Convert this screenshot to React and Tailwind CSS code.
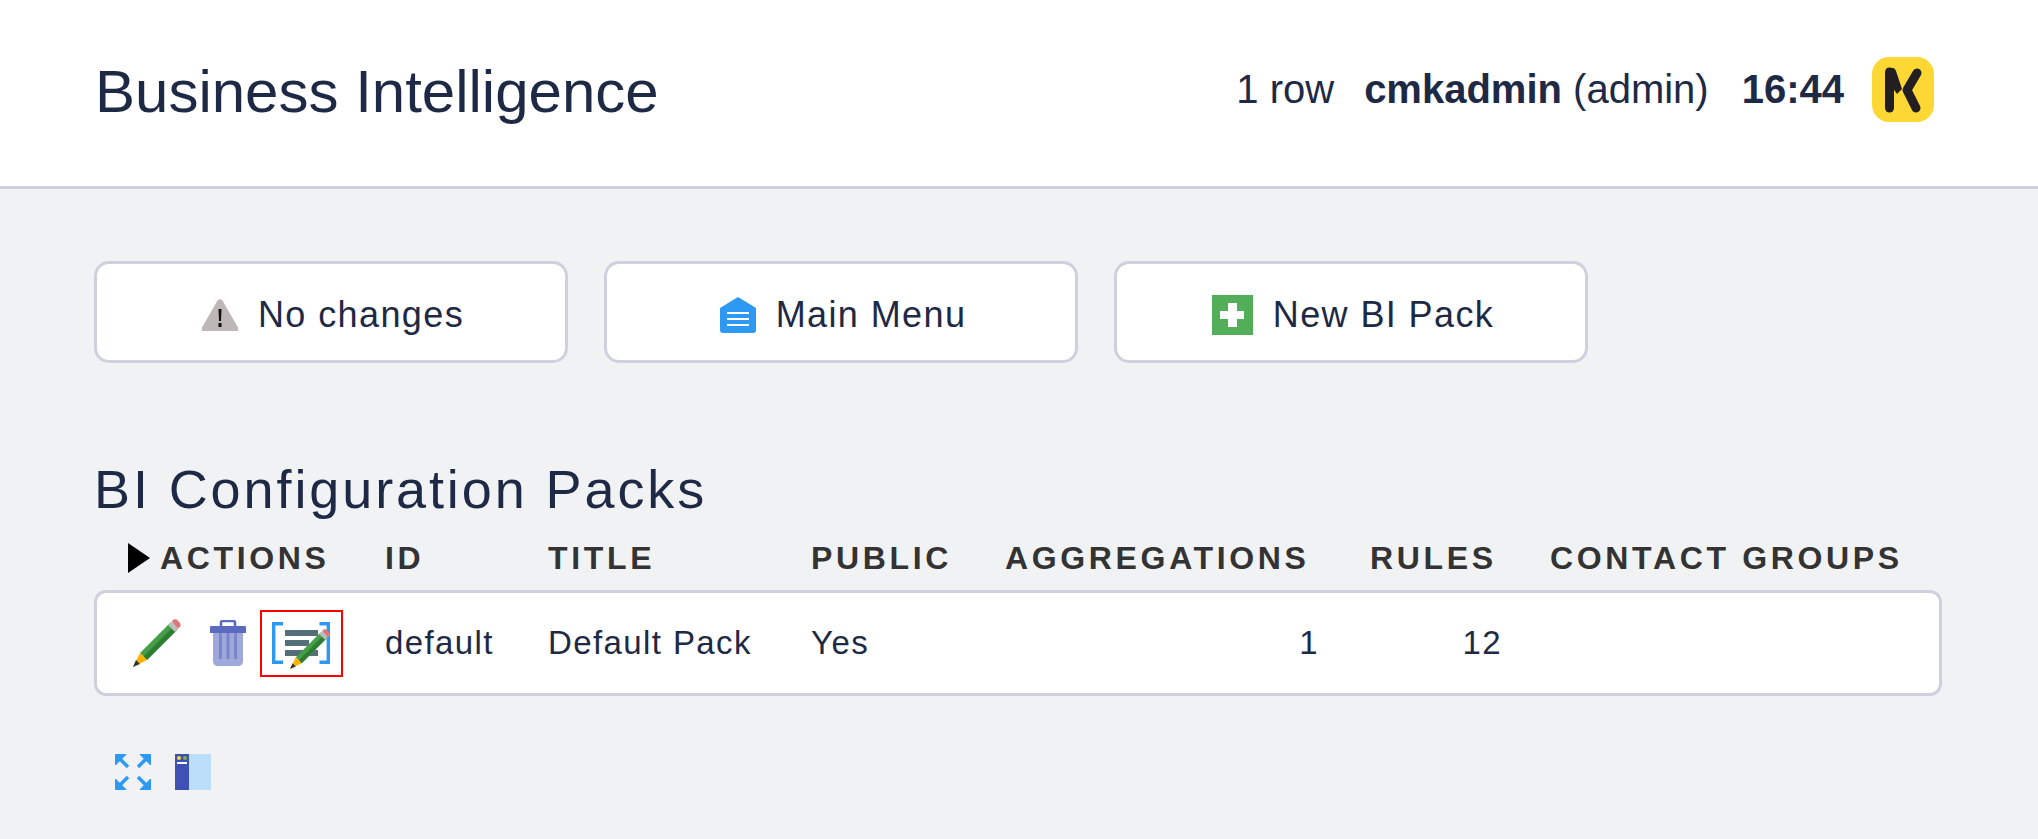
import React from 'react';

function Pencil({ className }) {
  return (
    <svg viewBox="0 0 48 48" className={className}>
      <path d="M37 4 L44 11 L14 41 L7 34 Z" fill="#43a047" />
      <path d="M40.5 7.5 L44 11 L14 41 L10.5 37.5 Z" fill="#2e7d32" />
      <path d="M35 6 L41 0 L48 7 L42 13 Z" fill="#bdbdbd" />
      <path d="M39 2 L41 0.5 Q42.5 -0.3 44 0.8 L47 4 Q48 5.5 47 7 L45 9.5 Z" fill="#e57373" />
      <path d="M7 34 L14 41 L0 48 Z" fill="#ffb300" />
      <path d="M3 41 L7 45 L0 48 Z" fill="#37352f" />
    </svg>
  );
}

function Trash() {
  return (
    <svg viewBox="0 0 36 46" className="h-[46px] w-[36px] shrink-0">
      <path d="M3 12 H33 V41 Q33 46 28 46 H8 Q3 46 3 41 Z" fill="#9fa8da" />
      <path d="M0 7 Q0 6 1 6 H35 Q36 6 36 7 V13 H0 Z" fill="#5c6bc0" />
      <path d="M11 6 V2.5 Q11 1 12.5 1 H23.5 Q25 1 25 2.5 V6" fill="none" stroke="#5c6bc0" strokeWidth="2.5" />
      <path d="M10.5 13 V39 M18 13 V39 M25.5 13 V39" stroke="#7986cb" strokeWidth="3" />
    </svg>
  );
}

function Logo() {
  return (
    <svg viewBox="0 0 62 65" className="h-[65px] w-[62px] shrink-0">
      <rect width="62" height="65" rx="17" fill="#fdd835" />
      <path d="M17.5 15 V51" stroke="#231f20" strokeWidth="9" strokeLinecap="round" />
      <path d="M15 11 H21 Q23 11 24 14 L30 32 L25 37 L20 30 Z" fill="#231f20" />
      <path d="M45 16 L35 33 L44 51" fill="none" stroke="#231f20" strokeWidth="9" strokeLinecap="round" strokeLinejoin="round" />
    </svg>
  );
}

function ToolButton({ icon, label }) {
  return (
    <button className="flex h-[102px] w-[474px] items-center justify-center gap-5 rounded-[15px] border-[3px] border-[#cfd0de] bg-white pl-[4px] pt-[6px] text-[36px] tracking-[1.4px] text-[#1e2a45]">
      {icon}
      <span>{label}</span>
    </button>
  );
}

const columns = 'grid grid-cols-[279px_163px_263px_194px_337px_208px_1fr]';

export default function App() {
  return (
    <div className="min-h-[839px] bg-[#f1f2f4] font-['Liberation_Sans',Arial,sans-serif] text-[#1e2a45]">
      <header className="flex h-[189px] items-center justify-between border-b-[3px] border-[#cfd0de] bg-white pl-[95px] pr-[104px]">
        <h1 className="mb-[2px] text-[60px] font-normal">Business Intelligence</h1>
        <div className="mb-[8px] flex items-center text-[40px]">
          <span>1 row</span>
          <span className="ml-[30px]"><b>cmkadmin</b> (admin)</span>
          <b className="ml-[33px]">16:44</b>
          <span className="ml-[28px]"><Logo /></span>
        </div>
      </header>

      <main className="px-[94px] pr-[96px] pt-[72px]">
        <div className="flex gap-[36px]">
          <ToolButton
            label="No changes"
            icon={
              <svg viewBox="0 0 36 32" className="h-[32px] w-[36px]">
                <path d="M15.5 1.5 Q18 -1 20.5 1.5 L36 28.5 V32 H0 V28.5 Z" fill="#bdb7b7" />
                <path d="M16.5 10 H19.5 L19 22 H17 Z" fill="#111" />
                <rect x="16.5" y="24" width="3" height="4" fill="#111" />
              </svg>
            }
          />
          <ToolButton
            label="Main Menu"
            icon={
              <svg viewBox="0 0 36 36" className="h-[36px] w-[36px]">
                <path d="M18 0 L36 11 V33 Q36 36 33 36 H3 Q0 36 0 33 V11 Z" fill="#2e99f3" />
                <path d="M7 16 H29 M7 22 H29 M7 28 H29" stroke="#fff" strokeWidth="2" />
              </svg>
            }
          />
          <ToolButton
            label="New BI Pack"
            icon={
              <svg viewBox="0 0 41 40" className="h-[40px] w-[41px]">
                <rect width="41" height="40" fill="#53ae59" />
                <path d="M16 8 H25 V16 H32 V24 H25 V32 H16 V24 H8 V16 H16 Z" fill="#fff" />
              </svg>
            }
          />
        </div>

        <h2 className="mt-[95px] text-[54px] font-normal leading-[62px] tracking-[2.9px]">BI Configuration Packs</h2>

        <div className={`${columns} mt-[20px] items-center text-[32px] font-bold leading-[36px] tracking-[3.65px] text-[#333333]`}>
          <div className="flex items-center pl-[34px]">
            <svg viewBox="0 0 22 30" className="h-[30px] w-[22px]">
              <path d="M0 0 L22 15 L0 30 Z" fill="#000" />
            </svg>
            <span className="ml-[10px]">ACTIONS</span>
          </div>
          <div className="pl-[12px]">ID</div>
          <div className="pl-[12px]">TITLE</div>
          <div className="pl-[12px]">PUBLIC</div>
          <div className="pl-[12px]">AGGREGATIONS</div>
          <div className="pl-[40px]">RULES</div>
          <div className="whitespace-nowrap pl-[12px]">CONTACT GROUPS</div>
        </div>

        <div className={`${columns} mt-[14px] h-[106px] items-center rounded-[12px] border-[3px] border-[#cfd0de] bg-white text-[33px] tracking-[1.4px]`}>
          <div className="flex items-center pl-[36px]">
            <Pencil className="h-[48px] w-[48px] shrink-0" />
            <span className="ml-[29px]"><Trash /></span>
            <div className="relative ml-[14px] h-[67px] w-[83px] shrink-0 border-2 border-[#ff0000]">
              <svg viewBox="0 0 58 42" className="absolute left-[10px] top-[10px] h-[42px] w-[58px]">
                <path d="M11 1.7 H1.7 V40.3 H11 M47.5 1.7 H56.3 V40.3 H47.5" fill="none" stroke="#2e99f3" strokeWidth="3.4" />
                <path d="M13 11 H46 M13 21 H37 M13 31 H46" stroke="#546e7a" strokeWidth="6" />
              </svg>
              <Pencil className="absolute left-[28px] top-[17px] h-[40px] w-[40px]" />
            </div>
          </div>
          <div className="pb-[1px] pl-[9px]">default</div>
          <div className="pb-[1px] pl-[9px]">Default Pack</div>
          <div className="pb-[1px] pl-[9px]">Yes</div>
          <div className="pb-[1px] pr-[14px] text-right">1</div>
          <div className="pb-[1px] pr-[39px] text-right">12</div>
          <div />
        </div>

        <div className="mt-[58px] flex gap-[24px] pl-[21px]">
          <svg viewBox="0 0 36 36" className="h-[36px] w-[36px]">
            <g fill="#2e99f3" stroke="#2e99f3">
              <path d="M0.5 0.5 H11 L0.5 11 Z" />
              <path d="M35.5 0.5 H25 L35.5 11 Z" />
              <path d="M0.5 35.5 H11 L0.5 25 Z" />
              <path d="M35.5 35.5 H25 L35.5 25 Z" />
              <path d="M5 5 L13 13 M31 5 L23 13 M5 31 L13 23 M31 31 L23 23" strokeWidth="3.5" />
            </g>
          </svg>
          <svg viewBox="0 0 36 36" className="h-[36px] w-[36px]">
            <rect width="36" height="36" fill="#bbdefb" />
            <rect width="14" height="36" fill="#3f51b5" />
            <circle cx="4" cy="4" r="2" fill="#fdd835" />
            <circle cx="10" cy="4" r="2" fill="#7cb342" />
            <rect x="2" y="8" width="10" height="2" fill="#fff" />
          </svg>
        </div>
      </main>
    </div>
  );
}
